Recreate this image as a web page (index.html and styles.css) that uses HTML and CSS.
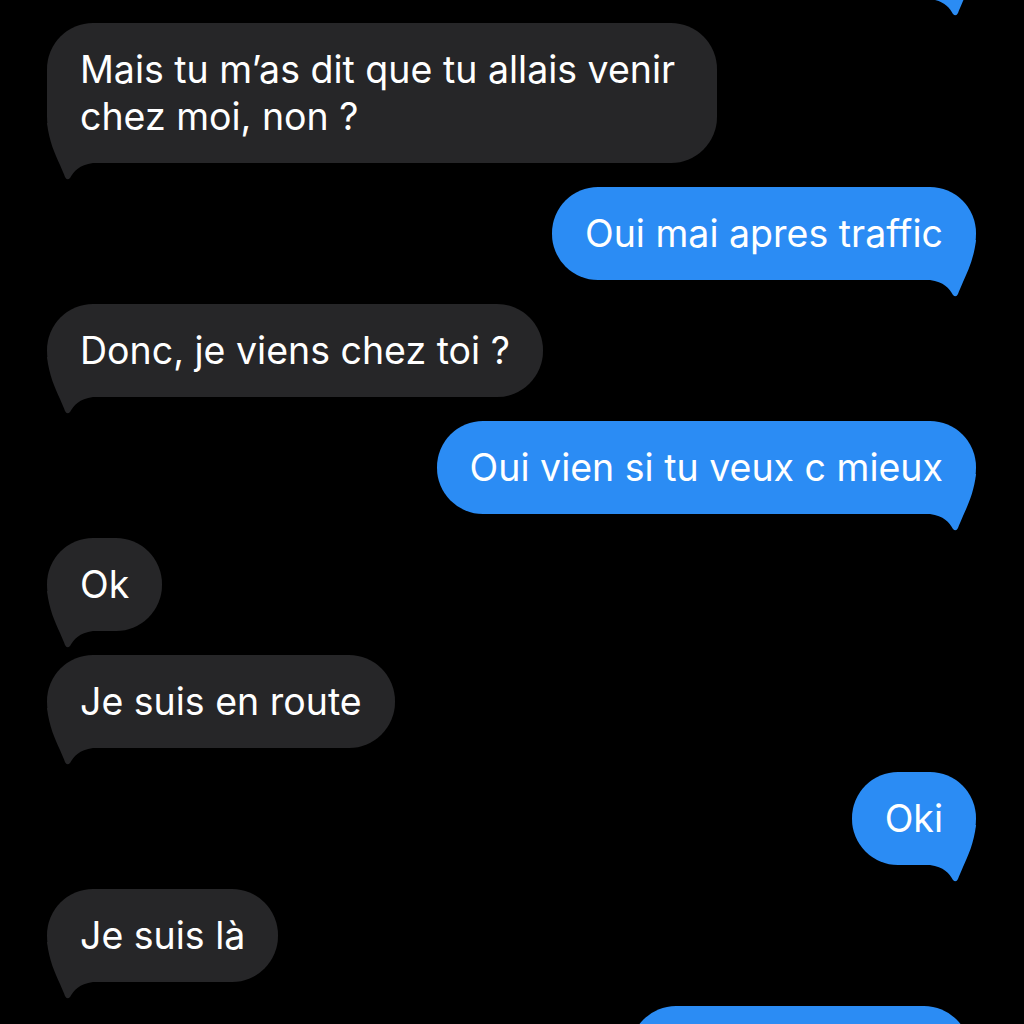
FILE: index.html
```html
<!DOCTYPE html>
<html lang="fr">

<head>
    <meta charset="UTF-8">
    <meta name="viewport" content="width=device-width, initial-scale=1.0">
    <title>Messages</title>
    <link rel="stylesheet" href="styles.css">
</head>

<body>
    <svg class="defs" width="0" height="0">
        <defs>
            <!-- bubble tail, drawn from the bubble's bottom-left corner -->
            <path id="tail" d="M0 -40 C2 -22 8 -9 13 2 C15 7 17 11 18 14 Q20 18 23 15 C27 8 32 2 46 0 L46 -40 Z" />
        </defs>
    </svg>

    <ul class="thread">
        <li class="bubble sent cut">&nbsp;<svg class="tail" viewBox="0 -40 60 60"><use href="#tail" /></svg></li>

        <li class="bubble received wide">Mais tu m’as dit que tu allais venir chez moi, non ?<svg class="tail" viewBox="0 -40 60 60"><use href="#tail" /></svg></li>
        <li class="bubble sent">Oui mai apres traffic<svg class="tail" viewBox="0 -40 60 60"><use href="#tail" /></svg></li>
        <li class="bubble received">Donc, je viens chez toi ?<svg class="tail" viewBox="0 -40 60 60"><use href="#tail" /></svg></li>
        <li class="bubble sent">Oui vien si tu veux c mieux<svg class="tail" viewBox="0 -40 60 60"><use href="#tail" /></svg></li>
        <li class="bubble received">Ok<svg class="tail" viewBox="0 -40 60 60"><use href="#tail" /></svg></li>
        <li class="bubble received">Je suis en route<svg class="tail" viewBox="0 -40 60 60"><use href="#tail" /></svg></li>
        <li class="bubble sent">Oki<svg class="tail" viewBox="0 -40 60 60"><use href="#tail" /></svg></li>
        <li class="bubble received">Je suis là<svg class="tail" viewBox="0 -40 60 60"><use href="#tail" /></svg></li>
        <li class="bubble sent next">&nbsp;</li>
    </ul>
</body>

</html>
```

FILE: styles.css
```css
html {
    background: #000;
}

body {
    margin: 0;
    padding: 0;
    height: 1024px;
    overflow: hidden;
    font-family: 'Inter', 'Roboto', sans-serif;
    color: #fff;
}

.defs {
    position: absolute;
}

.thread {
    list-style-type: none;
    margin: 0;
    padding: 0 48px 0 47px;
    display: flex;
    flex-direction: column;
    gap: 24px;
}

.bubble {
    position: relative;
    isolation: isolate;
    max-width: 596px;
    padding: 23px 33px;
    border-radius: 46px;
    font-size: 37.5px;
    line-height: 47px;
}

.bubble.wide {
    max-width: 604px;
}

.received {
    align-self: flex-start;
    background-color: #262628;
}

.sent {
    align-self: flex-end;
    background-color: #2b8cf4;
}

/* tail sits under the text but over the bubble fill */
.tail {
    position: absolute;
    z-index: -1;
    bottom: -20px;
    width: 60px;
    height: 60px;
    overflow: visible;
}

.received .tail {
    left: 0;
    fill: #262628;
}

.sent .tail {
    right: 0;
    fill: #2b8cf4;
    transform: scaleX(-1);
}

/* the message above the screen, only its tail shows */
.sent.cut {
    width: 229px;
    margin-top: -94px;
}

/* the message below the screen */
.sent.next {
    width: 274px;
    margin-right: 6px;
}
```
